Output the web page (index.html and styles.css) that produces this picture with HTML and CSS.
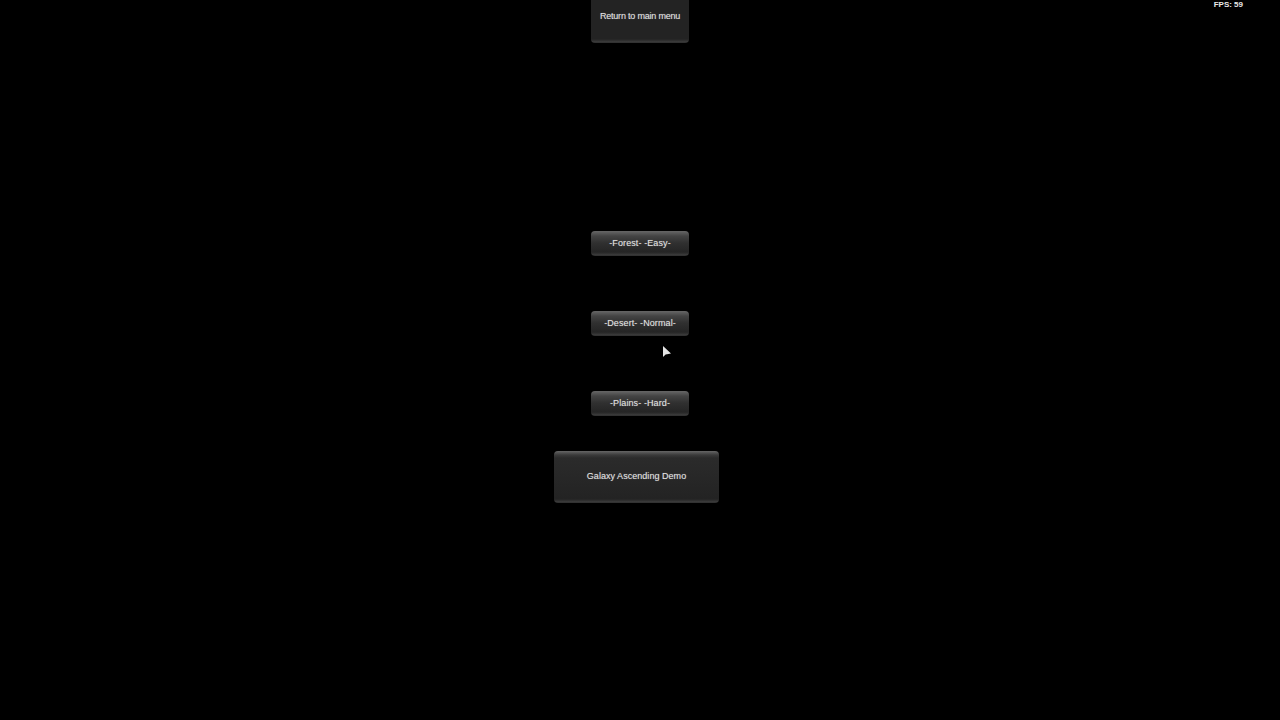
FILE: index.html
```html
<!DOCTYPE html>
<html lang="en">
<head>
  <meta charset="UTF-8" />
  <title>Galaxy Ascending Demo</title>
  <link rel="stylesheet" href="styles.css" />
</head>
<body>
  <div class="fps">FPS: 59</div>

  <main class="menu">
    <button class="btn btn-return">Return to main menu</button>
    <button class="btn btn-level">-Forest- -Easy-</button>
    <button class="btn btn-level">-Desert- -Normal-</button>
    <button class="btn btn-level">-Plains- -Hard-</button>
    <button class="btn btn-title">Galaxy Ascending Demo</button>
  </main>

  <svg class="cursor" width="10" height="14" viewBox="0 0 10 14">
    <path d="M1 1 L1 12 L3.6 9.6 L5 9.2 L9 8.6 Z" fill="#e4e4e4" />
  </svg>
</body>
</html>
```

FILE: styles.css
```css
* {
  box-sizing: border-box;
}
body {
  margin: 0;
  height: 720px;
  overflow: hidden;
  position: relative;
  background: #000;
  font-family: "Liberation Sans", Arial, sans-serif;
}

/* Button column */
.menu {
  display: flex;
  flex-direction: column;
  align-items: center;
}

.btn {
  display: block;
  padding: 0 0 2px;
  border: none;
  border-radius: 4px;
  color: #e2e2e2;
  font-family: inherit;
  font-size: 9px;
  letter-spacing: 0.1px;
  text-align: center;
  text-shadow: 0 0 1px rgba(255, 255, 255, 0.35);
  background: linear-gradient(#666 0, #505050 2px, #3a3a3a 4px, #2b2b2b 7px, #232323 calc(100% - 4px), #333 calc(100% - 2px), #3e3e3e calc(100% - 1px), #262626 100%);
}

.btn-return {
  width: 98px;
  height: 43px;
  padding-bottom: 11px;
  letter-spacing: -0.2px;
  border-radius: 0 0 4px 4px;
  background: linear-gradient(#232323 0, #232323 calc(100% - 4px), #333 calc(100% - 2px), #3e3e3e calc(100% - 1px), #262626 100%);
}

.btn-level {
  width: 98px;
  height: 25px;
  margin-bottom: 55px;
  letter-spacing: 0.1px;
  background: linear-gradient(#666 0, #5a5a5a 2px, #444 5px, #303030 12px, #252525 calc(100% - 4px), #333 calc(100% - 2px), #3e3e3e calc(100% - 1px), #262626 100%);
}
.btn-return + .btn-level {
  margin-top: 188px;
}
.btn-level:nth-child(4) {
  margin-bottom: 35px;
}

.btn-title {
  width: 165px;
  height: 52px;
  margin-right: 7px;
  padding-bottom: 3px;
  letter-spacing: 0.04px;
}

/* Overlays */
.fps {
  position: absolute;
  top: 0;
  right: 37px;
  color: #e8e8e8;
  font-size: 8px;
  font-weight: bold;
  line-height: 10px;
}
.cursor {
  position: absolute;
  left: 662px;
  top: 345px;
}
```
